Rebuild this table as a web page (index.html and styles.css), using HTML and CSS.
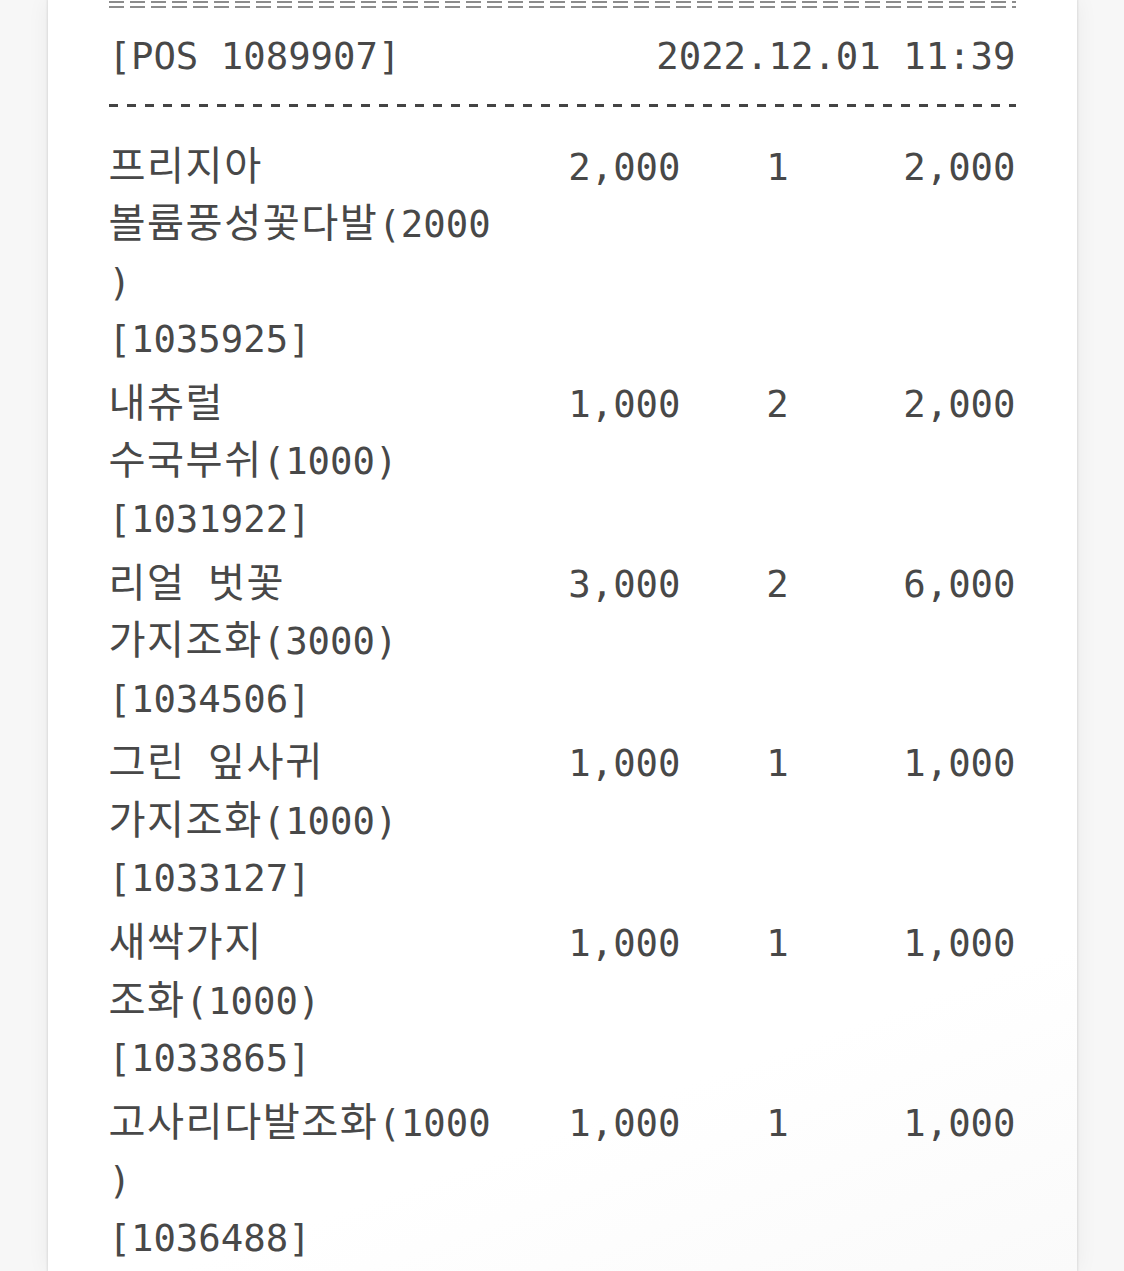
FILE: index.html
```html
<!DOCTYPE html>
<html lang="ko">
<head>
<meta charset="utf-8">
<title>영수증</title>
<link rel="stylesheet" href="styles.css">
</head>
<body>
<div class="paper">
  <div class="rule-double"></div>
  <div class="head">
    <span>[POS 1089907]</span>
    <span>2022.12.01 11:39</span>
  </div>
  <div class="rule-dash"></div>
  <ul class="items">
    <li class="item">
      <div class="name"><span class="ko">프리지아</span><br><span class="ko">볼륨풍성꽃다발</span>(2000<br>)<br>[1035925]</div>
      <div class="price">2,000</div>
      <div class="qty">1</div>
      <div class="total">2,000</div>
    </li>
    <li class="item">
      <div class="name"><span class="ko">내츄럴</span><br><span class="ko">수국부쉬</span>(1000)<br>[1031922]</div>
      <div class="price">1,000</div>
      <div class="qty">2</div>
      <div class="total">2,000</div>
    </li>
    <li class="item">
      <div class="name"><span class="ko">리얼</span> <span class="ko">벗꽃</span><br><span class="ko">가지조화</span>(3000)<br>[1034506]</div>
      <div class="price">3,000</div>
      <div class="qty">2</div>
      <div class="total">6,000</div>
    </li>
    <li class="item">
      <div class="name"><span class="ko">그린</span> <span class="ko">잎사귀</span><br><span class="ko">가지조화</span>(1000)<br>[1033127]</div>
      <div class="price">1,000</div>
      <div class="qty">1</div>
      <div class="total">1,000</div>
    </li>
    <li class="item">
      <div class="name"><span class="ko">새싹가지</span><br><span class="ko">조화</span>(1000)<br>[1033865]</div>
      <div class="price">1,000</div>
      <div class="qty">1</div>
      <div class="total">1,000</div>
    </li>
    <li class="item">
      <div class="name"><span class="ko">고사리다발조화</span>(1000<br>)<br>[1036488]</div>
      <div class="price">1,000</div>
      <div class="qty">1</div>
      <div class="total">1,000</div>
    </li>
  </ul>
</div>
</body>
</html>
```
FILE: styles.css
```css
html, body {
  margin: 0;
  padding: 0;
  background: #f7f7f7;
  height: 100%;
}
body {
  font-family: "DejaVu Sans Mono", "Noto Sans CJK KR", monospace;
  font-size: 37.3px;
  line-height: 57.4px;
  color: #484848;
  overflow: hidden;
}
.paper {
  width: 1029px;
  margin: 0 auto;
  min-height: 1271px;
  background: linear-gradient(160deg, #ffffff 80%, #fafafa 100%);
  box-shadow: 0 0 2px 1px rgba(0, 0, 0, 0.09), 0 0 22px rgba(0, 0, 0, 0.06);
  padding: 0 61px;
  box-sizing: border-box;
}
.rule-double {
  height: 9px;
  background:
    repeating-linear-gradient(90deg, #8c8c8c 0 15px, transparent 15px 21px) 0 1px / 100% 2px no-repeat,
    repeating-linear-gradient(90deg, #8c8c8c 0 15px, transparent 15px 21px) 0 6px / 100% 2px no-repeat;
}
.head {
  display: flex;
  justify-content: space-between;
  margin-top: 19px;
}
.rule-dash {
  height: 3px;
  margin-top: 19px;
  background: repeating-linear-gradient(90deg, #444 0 9px, transparent 9px 18px);
}
.items {
  list-style: none;
  margin: 24px 0 0;
  padding: 0;
}
.item {
  display: grid;
  grid-template-columns: 375px 197px 194px 1fr;
  align-items: start;
  padding-top: 7.5px;
}
.name {
  white-space: nowrap;
}
.ko {
  font-family: "Noto Sans CJK KR", sans-serif;
  font-size: 1.08em;
  line-height: 1;
  letter-spacing: 1.5px;
}
.price {
  text-align: right;
}
.qty {
  text-align: center;
}
.total {
  text-align: right;
}
```
